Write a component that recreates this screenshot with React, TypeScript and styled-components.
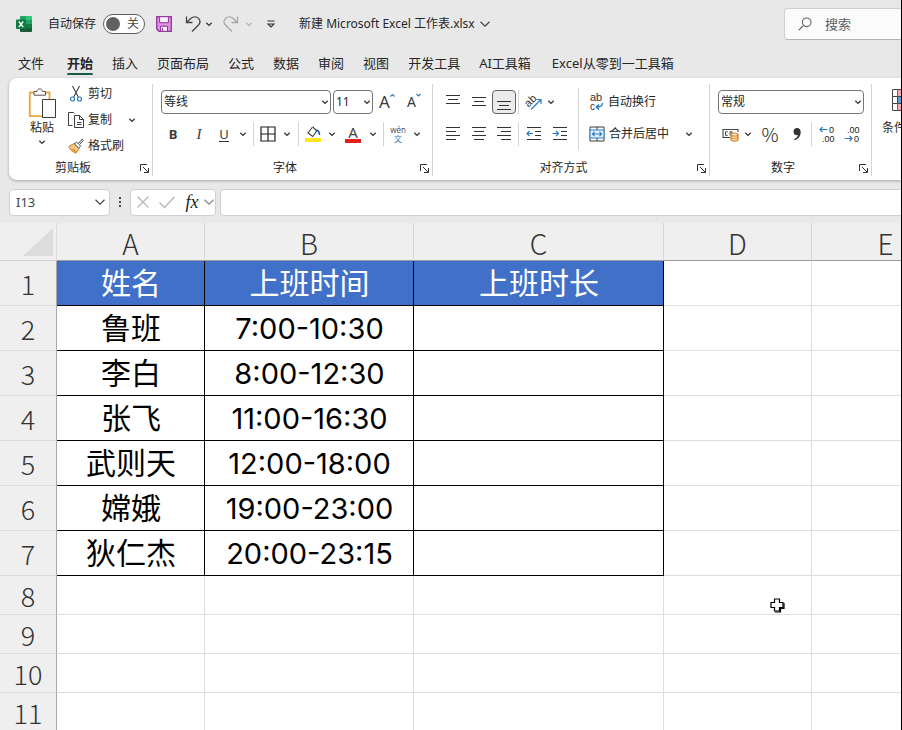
import React from "react";
import styled, { createGlobalStyle, css } from "styled-components";

const UI_FONT = '"Noto Sans", "Noto Sans CJK SC", sans-serif';
const CELL_FONT = 'Inter, "Noto Sans CJK SC", sans-serif';
const HEAD_FONT = '"Noto Sans CJK SC", sans-serif';

const GlobalStyle = createGlobalStyle`
  *, *::before, *::after { box-sizing: border-box; }
  body { margin: 0; background: #e8e8e8; }
  button, input, select { font: inherit; color: inherit; }
  svg { display: block; flex: none; overflow: visible; }
`;

/* ---------- shell ---------- */

const Window = styled.div`
  display: flex;
  flex-direction: column;
  height: 100vh;
  overflow: hidden;
  background: #e8e8e8;
  border-right: 1px solid #000;
  font: 12px/16px ${UI_FONT};
  color: #262626;
`;

const TitleBar = styled.header`
  display: flex;
  align-items: center;
  flex: none;
  height: 47px;
  padding-left: 16px;
`;

const AutoSave = styled.label`
  display: flex;
  align-items: center;
  gap: 7px;
  margin: 0 11px 0 16px;
`;

const Switch = styled.span`
  display: grid;
  width: 42px;
  height: 20px;
  border: 1px solid #5c5c5c;
  border-radius: 10px;
  background: #fff;

  > * { grid-area: 1 / 1; }
`;

const SwitchInput = styled.input`
  margin: 0;
  width: 100%;
  height: 100%;
  opacity: 0;
`;

const SwitchFace = styled.span`
  display: flex;
  align-items: center;
  justify-content: space-between;
  padding: 0 5px 0 2px;
  line-height: 18px;
  color: #4a4a4a;

  &::before {
    content: "";
    width: 14px;
    height: 14px;
    border-radius: 50%;
    background: #616161;
  }
`;

const History = styled.div`
  display: flex;
  align-items: center;
  margin-left: 13px;
`;

const IconButton = styled.button<{ $w?: number; $on?: boolean }>`
  display: flex;
  align-items: center;
  justify-content: center;
  flex: none;
  width: ${(p) => p.$w ?? 26}px;
  height: 24px;
  padding: 0;
  border: 1px solid transparent;
  border-radius: 4px;
  background: none;
  ${(p) =>
    p.$on &&
    css`
      border-color: #616161;
      background: #ebebeb;
    `}
`;

const FileName = styled.button`
  display: flex;
  align-items: center;
  gap: 4px;
  margin-left: 10px;
  padding: 0;
  border: 0;
  background: none;
  white-space: nowrap;
`;

const Search = styled.label`
  display: flex;
  align-items: center;
  gap: 13px;
  flex: 0 0 117px;
  height: 32px;
  margin: 1px 0 0 auto;
  padding-left: 13px;
  border: 1px solid #d0d0d0;
  border-right: 0;
  border-bottom-color: #b4b4b4;
  border-radius: 4px 0 0 4px;
  background: #fbfbfb;
`;

const SearchInput = styled.input`
  min-width: 0;
  width: 100%;
  padding: 0;
  border: 0;
  outline: 0;
  background: none;
  font-size: 13px;

  &::placeholder { color: #616161; opacity: 1; }
`;

const Tabs = styled.nav`
  display: flex;
  flex: none;
  gap: 19px;
  height: 31px;
  padding-left: 18px;
`;

const Tab = styled.button<{ $active?: boolean; $gap?: number }>`
  display: flex;
  flex: none;
  flex-direction: column;
  align-items: stretch;
  height: 28px;
  margin-right: ${(p) => p.$gap ?? 0}px;
  padding: 7px 0 0;
  border: 0;
  background: none;
  font-size: 13px;
  line-height: 19px;
  font-weight: ${(p) => (p.$active ? 700 : 400)};
  white-space: nowrap;

  &::after {
    content: "";
    height: 2px;
    border-radius: 1px;
    background: ${(p) => (p.$active ? "#185c41" : "transparent")};
  }
`;

/* ---------- ribbon ---------- */

const Ribbon = styled.section`
  display: flex;
  flex: none;
  height: 102px;
  margin-left: 9px;
  overflow: hidden;
  background: #fff;
  border-radius: 8px 0 0 8px;
  box-shadow: 0 1px 3px #0000004d;
`;

const Group = styled.div<{ $w: number }>`
  display: flex;
  flex: none;
  flex-direction: column;
  width: ${(p) => p.$w}px;
  padding: 4px 0 0;
  margin: 6px 0 4px;
  border-right: 1px solid #d4d4d4;

  &:last-child { border-right: 0; }
`;

const GroupBody = styled.div<{ $pad?: number }>`
  display: flex;
  flex: 1;
  min-height: 0;
  padding-left: ${(p) => p.$pad ?? 7}px;
`;

const GroupFooter = styled.div`
  display: flex;
  align-items: center;
  height: 16px;
  text-align: center;

  > span { flex: 1; }
`;

const Stack = styled.div<{ $indent?: number }>`
  display: flex;
  flex-direction: column;
  gap: 4px;
  padding-left: ${(p) => p.$indent ?? 0}px;
`;

const ToolRow = styled.div`
  display: flex;
  align-items: center;
  height: 28px;
`;

const Divider = styled.i<{ $h?: number; $m?: number }>`
  flex: none;
  width: 1px;
  height: ${(p) => p.$h ?? 24}px;
  margin: 0 ${(p) => p.$m ?? 3}px;
  background: #d4d4d4;
`;

const Picker = styled.span<{ $w: number }>`
  display: grid;
  align-items: center;
  flex: none;
  width: ${(p) => p.$w}px;

  > * { grid-area: 1 / 1; }
  > svg { justify-self: end; margin-right: 2px; pointer-events: none; }
`;

const PickerRow = styled(ToolRow)`
  gap: 2px;
  padding-left: 1px;
`;

const PickerSelect = styled.select`
  appearance: none;
  width: 100%;
  height: 24px;
  padding: 0 2px;
  border: 1px solid #767676;
  border-radius: 4px;
  background: #fff;
`;

const PasteButton = styled.button`
  display: flex;
  flex-direction: column;
  align-items: center;
  width: 44px;
  height: 64px;
  margin-left: 4px;
  padding: 0;
  border: 0;
  background: none;
  gap: 2px;
`;

const ClipList = styled.div`
  display: flex;
  flex-direction: column;
  margin-left: 4px;
  margin-top: -7px;
`;

const ClipRow = styled.div`
  display: flex;
  align-items: center;
  justify-content: space-between;
  width: 72px;
`;

const TextTool = styled.button`
  display: flex;
  align-items: center;
  gap: 4px;
  height: 26px;
  padding: 0;
  border: 0;
  background: none;
  white-space: nowrap;
`;

const FormatButton = styled.button`
  display: flex;
  flex-direction: column;
  align-items: center;
  gap: 8px;
  padding: 0;
  border: 0;
  background: none;
  white-space: nowrap;
`;

/* ---------- formula bar ---------- */

const FormulaBar = styled.div`
  display: flex;
  align-items: center;
  flex: none;
  height: 28px;
  margin: 8px 0 7px;
  padding-left: 9px;
`;

const boxed = css`
  height: 27px;
  border: 1px solid #d0d0d0;
  border-radius: 4px;
  background: #fff;
`;

const NameBox = styled.div`
  ${boxed}
  display: flex;
  align-items: center;
  flex: none;
  width: 101px;
  padding: 0 3px 0 6px;
`;

const PlainInput = styled.input`
  flex: 1;
  min-width: 0;
  padding: 0;
  border: 0;
  outline: 0;
  background: none;
  font-size: 13px;
  color: #444;
`;

const Dots = styled.span`
  display: flex;
  flex-direction: column;
  flex: none;
  gap: 2px;
  margin: 0 9px;

  i { width: 2px; height: 2px; background: #444; }
`;

const FxBox = styled.div`
  ${boxed}
  display: flex;
  align-items: center;
  flex: none;
  width: 86px;
  margin-right: 4px;
`;

const Fx = styled.span`
  font: italic 400 18px/20px "Liberation Serif", serif;
  color: #222;
`;

const FormulaInput = styled.input`
  ${boxed}
  flex: 1;
  min-width: 0;
  border-right: 0;
  border-radius: 4px 0 0 4px;
  outline: 0;
`;

/* ---------- sheet ---------- */

const Sheet = styled.main`
  position: relative;
  flex: 1;
  min-height: 0;
  overflow: hidden;
  background: #fff;
`;

const Grid = styled.table`
  table-layout: fixed;
  width: 960px;
  border-collapse: separate;
  border-spacing: 0;
  font: 30px/40px ${CELL_FONT};
  color: #000;
`;

const Col = styled.col<{ $w: number }>`
  width: ${(p) => p.$w}px;
`;

const ColHead = styled.th`
  height: 38px;
  padding: 3px 0 0;
  border-bottom: 1px solid #9b9b9b;
  border-right: 1px solid #d6d6d6;
  background: #efefef;
  font: 300 28px/33px ${HEAD_FONT};
  color: #333;
`;

const Corner = styled(ColHead)`
  padding: 0 3px 3px 0;
  border-right-color: #dadada;
  border-bottom-color: #d0d0d0;

  svg { margin: 4px 0 0 auto; }
`;

const Row = styled.tr<{ $h: number }>`
  height: ${(p) => p.$h}px;
`;

const RowHead = styled.th`
  padding: 0;
  border-right: 1px solid #a8a8a8;
  border-bottom: 1px solid #dcdcdc;
  background: #efefef;
  font: 300 27px/33px ${HEAD_FONT};
  color: #333;
`;

const Cell = styled.td<{ $kind: "title" | "data" | "blank" }>`
  padding: 0 0 0 1px;
  border-right: 1px solid #dedede;
  border-bottom: 1px solid #dedede;
  text-align: center;
  white-space: nowrap;
  ${(p) => p.$kind !== "blank" && css`border-color: #000;`}
  ${(p) => p.$kind === "title" && css`background: #4070c8; color: #fff;`}
`;

const Time = styled.time`
  font-size: 29px;
`;

const Pointer = styled.span`
  position: absolute;
  left: 769px;
  top: 374px;
`;

/* ---------- icons ---------- */

const Svg = ({ w = 16, h = w, children }: { w?: number; h?: number; children: React.ReactNode }) => (
  <svg width={w} height={h} viewBox={`0 0 ${w} ${h}`} fill="none" aria-hidden="true">
    {children}
  </svg>
);

const Chevron = ({ color = "#333" }: { color?: string }) => (
  <Svg w={8}><path d="M1.3 2.8 4 5.4 6.7 2.8" stroke={color} strokeWidth="1.3" /></Svg>
);

const WideChevron = ({ color = "#444" }: { color?: string }) => (
  <Svg w={12}><path d="M1.5 3.8 6 8.2l4.5-4.4" stroke={color} strokeWidth="1.2" /></Svg>
);

const ExcelLogo = () => (
  <Svg w={16}>
    <path d="M4 1a1 1 0 0 1 1-1h5v4H4z" fill="#21a366" />
    <path d="M10 0h5a1 1 0 0 1 1 1v3h-6z" fill="#33c481" />
    <path d="M4 4h6v4H4z" fill="#107c41" />
    <path d="M10 4h6v4h-6z" fill="#21a366" />
    <path d="M4 8h6v4H4z" fill="#185c37" />
    <path d="M10 8h6v4h-6z" fill="#107c41" />
    <path d="M4 12h12v3a1 1 0 0 1-1 1H5a1 1 0 0 1-1-1z" fill="#185c37" />
    <rect y="3.5" width="10" height="9.5" rx="1" fill="#107c41" />
    <path d="m2.8 5.5 4.4 5.6M7.2 5.5l-4.4 5.6" stroke="#fff" strokeWidth="1.4" />
  </Svg>
);

const SaveIcon = () => (
  <Svg w={16}>
    <path d="M.7.7h14.6v14.6H3L.7 13z" fill="#dc92e0" stroke="#93349c" strokeWidth="1.3" />
    <path d="M3.6.7h8.8v6H3.6z" fill="#f7f1f8" stroke="#93349c" />
    <path d="M4.5 15.3v-5h7v5z" fill="#f7f1f8" stroke="#93349c" />
    <path d="M6.5 12v3" stroke="#93349c" />
  </Svg>
);

const UndoIcon = ({ flip, color }: { flip?: boolean; color: string }) => (
  <Svg w={16} h={18}>
    <g transform={flip ? "matrix(-1 0 0 1 16 0)" : undefined} stroke={color} strokeWidth="1.3">
      <path d="M1.5 1.5v6h6" />
      <path d="M1.8 7.2 6 3.3c2.4-2 5.6-1.9 7.5.1 1.9 2.1 1.7 4.9-.2 6.8L7 16.5" />
    </g>
  </Svg>
);

const CustomizeIcon = () => (
  <Svg w={10}><path d="M1.5 2h7M2 5l3 3 3-3z" stroke="#333" strokeWidth="1.1" /></Svg>
);

const SearchIcon = () => (
  <Svg w={14}>
    <circle cx="8.7" cy="5.3" r="4.3" stroke="#616161" strokeWidth="1.1" />
    <path d="M5.6 8.4.8 13.2" stroke="#616161" strokeWidth="1.2" />
  </Svg>
);

const PasteIcon = () => (
  <Svg w={28} h={30}>
    <path d="M6 4.5H1.8v23.7H14M17 4.5h4.5V11" stroke="#eda63a" strokeWidth="1.8" />
    <path d="M6 7.2V3.5h3C9.5 0 14 0 14.5 3.5h3v3.7z" fill="#fff" stroke="#555" />
    <path d="M14.5 11.5h13v18h-13z" fill="#fdfdfd" stroke="#3b3b3b" />
  </Svg>
);

const CutIcon = () => (
  <Svg w={16}>
    <path d="m4.5 0 6 11.5M11.5 0l-6 11.5" stroke="#444" strokeWidth="1.1" />
    <circle cx="4.5" cy="13" r="2" stroke="#2b7cc0" strokeWidth="1.2" />
    <circle cx="11.5" cy="13" r="2" stroke="#2b7cc0" strokeWidth="1.2" />
  </Svg>
);

const CopyIcon = () => (
  <Svg w={16}>
    <path d="M4.5 13.5h-4V.5h5l1 1" stroke="#3b3b3b" />
    <path d="M6.5 3.5h5l4 4v8h-9z" fill="#fff" stroke="#3b3b3b" />
    <path d="M11.5 3.5v4h4M9 10.5h4.5M9 12.5h4.5" stroke="#3b3b3b" />
  </Svg>
);

const BrushIcon = () => (
  <Svg w={16}>
    <path d="M.8 8.5 6 5.5l5 5L8 15.2C5.5 14.5 2 12 .8 8.5z" fill="#f6c98b" stroke="#d9821e" />
    <path d="M3 10 8.500 12.5 7.5 14.5 5 13z" fill="#e8922c" />
    <path d="m6.3 5.8 2.2-1.6 1.8 1.5L14 1.2l1.3 1.2-3.8 4.3 1 1.6-1.8 1.8z" fill="#fff" stroke="#444" />
  </Svg>
);

const LauncherIcon = () => (
  <Svg w={9}><path d="M.5 7V.5H7M3 3l5 5M8.5 4v4.5H4" stroke="#333" /></Svg>
);

const Glyph = styled.span<{ $bold?: boolean; $italic?: boolean }>`
  font: ${(p) => (p.$italic ? "italic" : "normal")} ${(p) => (p.$bold ? 700 : 400)}
    ${(p) => (p.$italic ? 15 : 13)}px/16px ${(p) => (p.$italic ? '"Liberation Serif", serif' : UI_FONT)};
  color: #3b3b3b;
`;

const Underlined = styled(Glyph)`
  line-height: 14px;
  border-bottom: 1px solid #3b3b3b;
`;

const Percent = styled.span`
  font: 300 19px/20px ${HEAD_FONT};
  color: #222;
`;

const SizedA = styled.span<{ $size: number }>`
  display: flex;
  align-items: flex-start;
  font-size: ${(p) => p.$size}px;
  line-height: 18px;
  color: #3b3b3b;
`;

const Caret = ({ down }: { down?: boolean }) => (
  <Svg w={5}><path d={down ? "M.5 1l2 2 2-2" : "M.5 3.5l2-2 2 2"} stroke="#2b7cc0" strokeWidth="1.1" /></Svg>
);

const BordersIcon = () => (
  <Svg w={16}><path d="M1 1h14v14H1zM8 1v14M1 8h14" stroke="#1f1f1f" strokeWidth="1.2" /></Svg>
);

const FillIcon = () => (
  <Svg w={16}>
    <path d="M7.5 1 3 6.8l4.7 3.7 4.5-5.8L8.5 2V.5" stroke="#444" strokeWidth="1.1" />
    <path d="M10.5 4.5c2-.8 3.8.3 4 4.5" stroke="#1f5fa8" strokeWidth="1.6" />
    <path d="M0 12h16v4H0z" fill="#ffe51f" />
  </Svg>
);

const FontColorIcon = styled.span`
  width: 16px;
  height: 17px;
  border-bottom: 4px solid #e0201b;
  font-size: 15px;
  line-height: 13px;
  text-align: center;
  color: #444;
`;

const Pinyin = styled.span`
  display: flex;
  flex-direction: column;
  align-items: center;
  font-size: 8px;
  line-height: 9px;
  color: #555;

  em { font-style: normal; color: #2b7cc0; }
`;

const Lines = ({ rows, align }: { rows: number[]; align?: "left" | "center" | "right" }) => (
  <Svg w={16}>
    {rows.map((y, i) => {
      const len = i % 2 ? 10 : 14;
      const x = align === "left" ? 1 : align === "right" ? 15 - len : 8 - len / 2;
      return <path key={y} d={`M${x} ${y + 0.5}h${len}`} stroke="#333" />;
    })}
  </Svg>
);

const IndentIcon = ({ right }: { right?: boolean }) => (
  <Svg w={16}>
    <path d="M1 1.5h14M9 5.5h6M9 9.5h6M1 13.5h14" stroke="#333" />
    <path
      d={right ? "M.5 7.5H6M4 5l2.5 2.5L4 10" : "M7 7.5H1.5M3.5 5 1 7.5 3.5 10"}
      stroke="#2b7cc0"
      strokeWidth="1.2"
    />
  </Svg>
);

const OrientationIcon = () => (
  <Svg w={17}>
    <text x="0" y="11" fontSize="11" fill="#333" transform="rotate(-45 5 8)" fontFamily="Liberation Sans">ab</text>
    <path d="M6 15.5 15.5 6M11.5 5.5H16V10" stroke="#2b7cc0" strokeWidth="1.2" />
  </Svg>
);

const WrapIcon = () => (
  <Svg w={15} h={18}>
    <text x="1" y="8" fontSize="11" fill="#333" fontFamily="Liberation Sans">ab</text>
    <text x="1" y="17" fontSize="10" fill="#333" fontFamily="Liberation Sans">c</text>
    <path d="M13.5 10c0 3-1.5 4-6 4M10 11.5 7.3 14l2.7 2.8" stroke="#2b7cc0" strokeWidth="1.4" />
  </Svg>
);

const MergeIcon = () => (
  <Svg w={16}>
    <path d="M1 1h14v14H1z" fill="#fff" stroke="#3b3b3b" />
    <path d="M8 1v3M8 12v3" stroke="#3b3b3b" />
    <path d="M1 4h14v8H1z" fill="#e3f1fb" stroke="#2b7cc0" />
    <path d="M3.5 8h9M5.5 6l-2 2 2 2M10.5 6l2 2-2 2" stroke="#2b7cc0" strokeWidth="1.2" />
  </Svg>
);

const CashIcon = () => (
  <Svg w={17} h={15}>
    <path d="M8 10.5H1v-8h15V5" stroke="#444" strokeWidth="1.1" />
    <path d="M5.8 4.8H3.5v3.5h2.300M8 8.5V4.8h2v1.5" stroke="#444" />
    <path d="M9 7.5v5c0 2 7 2 7 0v-5c0 2-7 2-7 0 0-2 7-2 7 0" fill="#fbe0b5" stroke="#d9821e" strokeWidth="1.2" />
    <path d="M9 10c0 2 7 2 7 0" stroke="#d9821e" />
  </Svg>
);

const CommaIcon = () => (
  <Svg w={10} h={14}>
    <path d="M5 1c2.2 0 3.7 1.5 3.7 4C8.7 9 6.5 12 2.5 13.2l-.4-1C4.3 11.2 5.6 9.8 6 8c-2.7.6-4.5-1-4.5-3.3C1.5 2.5 3 1 5 1z" fill="#333" />
  </Svg>
);

const DecimalIcon = ({ less }: { less?: boolean }) => (
  <Svg w={16} h={18}>
    <text x={less ? 3 : 10} y="8" fontSize="9" fill="#222" fontFamily="Liberation Sans">{less ? ".00" : "0"}</text>
    <text x={less ? 10 : 3} y="17" fontSize="9" fill="#222" fontFamily="Liberation Sans">{less ? "0" : ".00"}</text>
    <path
      d={less ? "M.5 13.5H8M5.5 11 8 13.5 5.5 16" : "M8.5 4.5H1M3.5 2 1 4.5 3.5 7"}
      stroke="#2b7cc0"
      strokeWidth="1.2"
    />
  </Svg>
);

const ConditionalIcon = () => (
  <Svg w={28} h={24}>
    <path d="M.5 1.5h27v21H.5z" fill="#fff" stroke="#444" />
    <path d="M6 2h8v6H6zM6 15h8v7H6z" fill="#f3a9a9" />
    <path d="M6 8h8v7H6z" fill="#5ba3dd" />
    <path d="M.5 8.5h27M.5 15.5h27M5.5 1.5v21M14.5 1.5v21" stroke="#444" />
    <path d="M5.5 1.5V8M5.5 15.5v7" stroke="#d43c3c" />
  </Svg>
);

const CancelIcon = () => (
  <Svg w={14}><path d="m1.5 1.5 11 11M12.5 1.5l-11 11" stroke="#b5b5b5" strokeWidth="1.2" /></Svg>
);

const EnterIcon = () => (
  <Svg w={18} h={14}><path d="m1.5 7.5 5 5L16.5 2" stroke="#b5b5b5" strokeWidth="1.3" /></Svg>
);

const CornerIcon = () => (
  <Svg w={30} h={28}><path d="M30 0v28H0z" fill="#dcdcdc" /></Svg>
);

const CrossPointer = () => (
  <Svg w={17}>
    <path d="M5.5 2h5v3.5H14v5h-3.5V14h-5v-3.5H2v-5h3.5z" fill="#fff" stroke="#000" strokeWidth="1.2" />
    <path d="M6 15h5.5v-3.5H15V6" stroke="#000" strokeWidth="1.2" />
  </Svg>
);

/* ---------- parts ---------- */

const MoreButton = ({ label, w = 16, color }: { label: string; w?: number; color?: string }) => (
  <IconButton $w={w} aria-label={label}><Chevron color={color} /></IconButton>
);

const Launcher = ({ label }: { label: string }) => (
  <IconButton $w={15} aria-label={label}><LauncherIcon /></IconButton>
);

const Choice = ({ label, value, w }: { label: string; value: string; w: number }) => (
  <Picker $w={w}>
    <PickerSelect aria-label={label} defaultValue={value}><option>{value}</option></PickerSelect>
    <Chevron />
  </Picker>
);

const tabs: { name: string; gap?: number }[] = [
  { name: "文件", gap: 4 }, { name: "开始" }, { name: "插入" }, { name: "页面布局" },
  { name: "公式" }, { name: "数据" }, { name: "审阅" }, { name: "视图" },
  { name: "开发工具" }, { name: "AI工具箱", gap: 2 }, { name: "Excel从零到一工具箱" },
];

const columns = [
  { name: "A", w: 148 }, { name: "B", w: 209 }, { name: "C", w: 250 },
  { name: "D", w: 148 }, { name: "E", w: 148 },
];

const records = [
  ["姓名", "上班时间", "上班时长"],
  ["鲁班", "7:00-10:30", ""],
  ["李白", "8:00-12:30", ""],
  ["张飞", "11:00-16:30", ""],
  ["武则天", "12:00-18:00", ""],
  ["嫦娥", "19:00-23:00", ""],
  ["狄仁杰", "20:00-23:15", ""],
];

const rowNumbers = Array.from({ length: 11 }, (_, i) => i + 1);

export default function App() {
  return (
    <Window>
      <GlobalStyle />
      <TitleBar>
        <ExcelLogo />
        <AutoSave>
          自动保存
          <Switch>
            <SwitchFace>关</SwitchFace>
            <SwitchInput type="checkbox" role="switch" />
          </Switch>
        </AutoSave>
        <IconButton $w={16} aria-label="保存"><SaveIcon /></IconButton>
        <History>
          <IconButton $w={16} aria-label="撤消"><UndoIcon color="#444" /></IconButton>
          <MoreButton label="撤消列表" />
          <IconButton $w={28} aria-label="恢复"><UndoIcon flip color="#a8a8a8" /></IconButton>
          <MoreButton label="恢复列表" w={8} color="#b5b5b5" />
          <IconButton $w={36} aria-label="自定义快速访问工具栏"><CustomizeIcon /></IconButton>
        </History>
        <FileName>新建 Microsoft Excel 工作表.xlsx<WideChevron /></FileName>
        <Search>
          <SearchIcon />
          <SearchInput placeholder="搜索" aria-label="搜索" />
        </Search>
      </TitleBar>

      <Tabs>
        {tabs.map((t) => (
          <Tab key={t.name} $active={t.name === "开始"} $gap={t.gap}>{t.name}</Tab>
        ))}
      </Tabs>

      <Ribbon>
        <Group $w={144}>
          <GroupBody>
            <PasteButton><PasteIcon />粘贴<Chevron /></PasteButton>
            <ClipList>
              <TextTool><CutIcon />剪切</TextTool>
              <ClipRow>
                <TextTool><CopyIcon />复制</TextTool>
                <MoreButton label="复制选项" />
              </ClipRow>
              <TextTool><BrushIcon />格式刷</TextTool>
            </ClipList>
          </GroupBody>
          <GroupFooter><span>剪贴板</span><Launcher label="剪贴板设置" /></GroupFooter>
        </Group>

        <Group $w={280}>
          <GroupBody>
            <Stack>
              <PickerRow>
                <Choice label="字体" value="等线" w={170} />
                <Choice label="字号" value="11" w={40} />
                <IconButton $w={24} aria-label="增大字号"><SizedA $size={17}>A<Caret /></SizedA></IconButton>
                <IconButton aria-label="减小字号"><SizedA $size={14}>A<Caret down /></SizedA></IconButton>
              </PickerRow>
              <ToolRow>
                <IconButton aria-label="加粗"><Glyph $bold>B</Glyph></IconButton>
                <IconButton aria-label="倾斜"><Glyph $italic>I</Glyph></IconButton>
                <IconButton $w={24} aria-label="下划线"><Underlined>U</Underlined></IconButton>
                <MoreButton label="下划线样式" w={14} />
                <Divider />
                <IconButton $w={22} aria-label="边框"><BordersIcon /></IconButton>
                <MoreButton label="边框样式" />
                <Divider />
                <IconButton $w={22} aria-label="填充颜色"><FillIcon /></IconButton>
                <MoreButton label="更多填充颜色" />
                <IconButton aria-label="字体颜色"><FontColorIcon>A</FontColorIcon></IconButton>
                <MoreButton label="更多字体颜色" w={14} />
                <Divider />
                <IconButton $w={22} aria-label="拼音"><Pinyin>wén<em>文</em></Pinyin></IconButton>
                <MoreButton label="拼音选项" />
              </ToolRow>
            </Stack>
          </GroupBody>
          <GroupFooter><span>字体</span><Launcher label="字体设置" /></GroupFooter>
        </Group>

        <Group $w={277}>
          <GroupBody>
            <Stack>
              <ToolRow>
                <IconButton aria-label="顶端对齐"><Lines rows={[1, 5, 9]} /></IconButton>
                <IconButton aria-label="垂直居中"><Lines rows={[3, 7, 11]} /></IconButton>
                <IconButton $w={24} $on aria-label="底端对齐"><Lines rows={[7, 11, 15]} /></IconButton>
                <Divider $m={2} />
                <IconButton $w={24} aria-label="方向"><OrientationIcon /></IconButton>
                <MoreButton label="方向选项" w={12} />
              </ToolRow>
              <ToolRow>
                <IconButton aria-label="左对齐"><Lines align="left" rows={[1, 5, 9, 13]} /></IconButton>
                <IconButton aria-label="居中"><Lines rows={[1, 5, 9, 13]} /></IconButton>
                <IconButton $w={24} aria-label="右对齐"><Lines align="right" rows={[1, 5, 9, 13]} /></IconButton>
                <Divider $m={2} />
                <IconButton aria-label="减少缩进量"><IndentIcon /></IconButton>
                <IconButton aria-label="增加缩进量"><IndentIcon right /></IconButton>
              </ToolRow>
            </Stack>
            <Divider $h={62} $m={5} />
            <Stack $indent={5}>
              <ToolRow><TextTool><WrapIcon />自动换行</TextTool></ToolRow>
              <ToolRow>
                <TextTool><MergeIcon />合并后居中</TextTool>
                <MoreButton label="合并选项" w={40} />
              </ToolRow>
            </Stack>
          </GroupBody>
          <GroupFooter><span>对齐方式</span><Launcher label="对齐设置" /></GroupFooter>
        </Group>

        <Group $w={162}>
          <GroupBody $pad={8}>
            <Stack>
              <ToolRow><Choice label="数字格式" value="常规" w={146} /></ToolRow>
              <ToolRow>
                <IconButton $w={24} aria-label="会计数字格式"><CashIcon /></IconButton>
                <MoreButton label="更多会计格式" w={12} />
                <IconButton $w={32} aria-label="百分比样式"><Percent>%</Percent></IconButton>
                <IconButton $w={22} aria-label="千位分隔样式"><CommaIcon /></IconButton>
                <Divider />
                <IconButton $w={24} aria-label="增加小数位数"><DecimalIcon /></IconButton>
                <IconButton aria-label="减少小数位数"><DecimalIcon less /></IconButton>
              </ToolRow>
            </Stack>
          </GroupBody>
          <GroupFooter><span>数字</span><Launcher label="数字设置" /></GroupFooter>
        </Group>

        <Group $w={80}>
          <GroupBody $pad={10}>
            <FormatButton><ConditionalIcon />条件格式</FormatButton>
          </GroupBody>
        </Group>
      </Ribbon>

      <FormulaBar>
        <NameBox>
          <PlainInput aria-label="名称框" defaultValue="I13" />
          <WideChevron />
        </NameBox>
        <Dots><i /><i /><i /></Dots>
        <FxBox>
          <IconButton $w={24} aria-label="取消"><CancelIcon /></IconButton>
          <IconButton $w={24} aria-label="输入"><EnterIcon /></IconButton>
          <IconButton aria-label="插入函数"><Fx>fx</Fx></IconButton>
          <IconButton $w={8} aria-label="函数列表"><WideChevron color="#888" /></IconButton>
        </FxBox>
        <FormulaInput aria-label="编辑栏" />
      </FormulaBar>

      <Sheet>
        <Grid>
          <colgroup>
            <Col $w={57} />
            {columns.map((c) => <Col key={c.name} $w={c.w} />)}
          </colgroup>
          <thead>
            <tr>
              <Corner aria-label="全选"><CornerIcon /></Corner>
              {columns.map((c) => <ColHead key={c.name} scope="col">{c.name}</ColHead>)}
            </tr>
          </thead>
          <tbody>
            {rowNumbers.map((n) => (
              <Row key={n} $h={n <= records.length ? 45 : 39}>
                <RowHead scope="row">{n}</RowHead>
                {columns.map((c, i) => {
                  const filled = n <= records.length && i < 3;
                  const kind = !filled ? "blank" : n === 1 ? "title" : "data";
                  const text = records[n - 1]?.[i];
                  return (
                    <Cell key={c.name} $kind={kind}>
                      {kind === "data" && c.name === "B" ? <Time>{text}</Time> : text}
                    </Cell>
                  );
                })}
              </Row>
            ))}
          </tbody>
        </Grid>
        <Pointer><CrossPointer /></Pointer>
      </Sheet>
    </Window>
  );
}
